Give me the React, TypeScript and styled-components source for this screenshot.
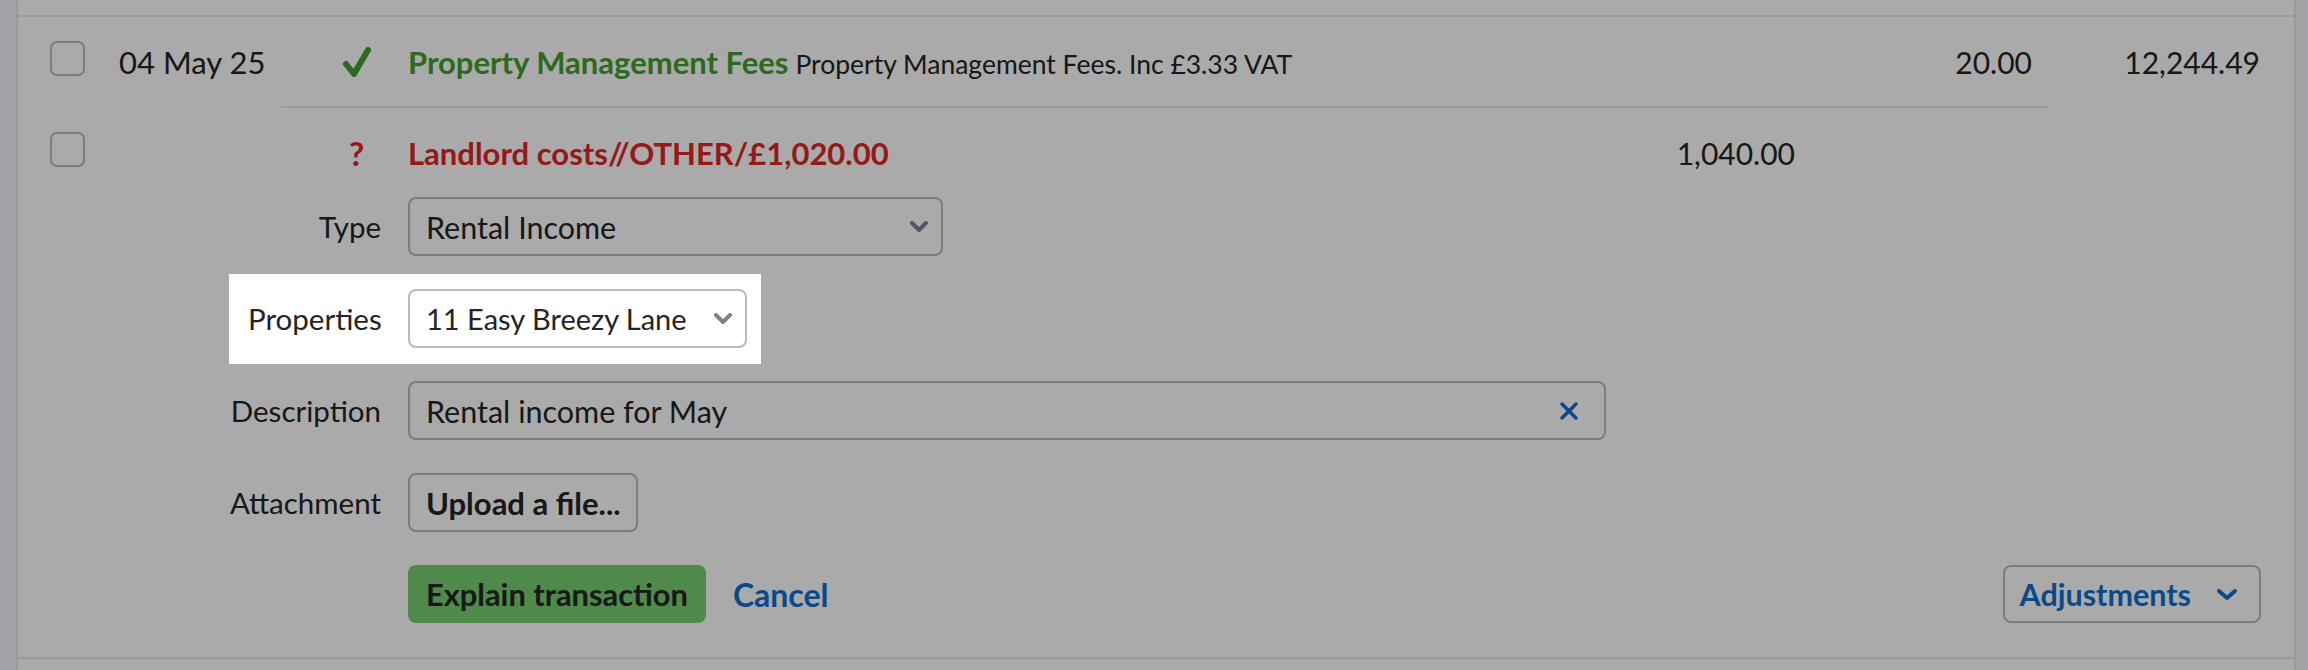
import React from "react";
import styled, { createGlobalStyle } from "styled-components";

const C = {
  text: "#242424",
  green: "#449e2d",
  red: "#e02626",
  blue: "#1070cf",
  btnGreen: "#78cf6f",
  line: "#e8e9ee",
  border: "#b3bcc5",
  chevron: "#778591",
  page: "#f4f7fc",
};

const GlobalStyle = createGlobalStyle`
  html, body { margin: 0; padding: 0; }
  body {
    background: ${C.page};
    font-family: Lato, "Open Sans", sans-serif;
    color: ${C.text};
    overflow: hidden;
  }
  * { box-sizing: border-box; }
`;

const Panel = styled.div`
  margin: 0 12px 0 16px;
  min-height: 100vh;
  background: #fff;
  border-left: 2px solid ${C.line};
  border-right: 2px solid ${C.line};
`;

const PrevRow = styled.div`
  height: 17px;
  border-bottom: 2px solid ${C.line};
`;

const Checkbox = styled.span`
  align-self: start;
  margin-top: 24px;
  width: 35px;
  height: 35px;
  border: 2px solid ${C.border};
  border-radius: 7px;
  background: #fff;
`;

const TxRow = styled.div<{ $h: number; $shift?: number }>`
  display: grid;
  grid-template-columns: 69px 224px 65px 1fr 200px 237px 228px;
  align-items: center;
  min-height: ${(p) => p.$h}px;
  padding: 0 34px 0 32px;

  & > :not(${Checkbox}) {
    padding-top: ${(p) => p.$shift ?? 0}px;
  }
`;

const Divider = styled.div`
  height: 2px;
  margin: 0 245px 0 263px;
  background: ${C.line};
`;

const Group = styled.div`
  border-bottom: 2px solid ${C.line};
`;

const DateCell = styled.span`
  font-size: 31px;
`;

const IconCell = styled.span`
  display: flex;
  align-items: center;
  padding-left: 6px;
`;

const Query = styled.span`
  color: ${C.red};
  font-weight: 700;
  font-size: 33px;
`;

const Content = styled.span`
  display: flex;
  align-items: baseline;
  gap: 7px;
  white-space: nowrap;
`;

const Title = styled.span<{ $color: string }>`
  color: ${(p) => p.$color};
  font-weight: 700;
  font-size: 31px;
`;

const Desc = styled.span`
  font-size: 26.5px;
`;

const Amount = styled.span`
  text-align: right;
  font-size: 30px;
`;

const Form = styled.div`
  display: flex;
  flex-direction: column;
  gap: 33px;
  padding: 7px 33px 34px 0;
`;

const FormRow = styled.div`
  display: grid;
  grid-template-columns: 363px 1fr;
  column-gap: 27px;
  align-items: center;
`;

const SpotRow = styled.div`
  display: flex;
`;

const Spotlight = styled.div`
  position: relative;
  z-index: 1;
  display: grid;
  grid-template-columns: 133px 339px;
  column-gap: 27px;
  align-items: center;
  margin: -15px 0 -16px 211px;
  padding: 15px 14px 16px 19px;
  background: #fff;
  box-shadow: 0 0 0 5000px rgba(0, 0, 0, 0.333);
`;

const Label = styled.label`
  text-align: right;
  font-size: 29.5px;
  white-space: nowrap;
`;

const Field = styled.div<{ $w: number; $size?: number }>`
  display: flex;
  align-items: center;
  justify-content: space-between;
  width: ${(p) => p.$w}px;
  height: 59px;
  padding: 0 13px 0 16px;
  border: 2px solid ${C.border};
  border-radius: 8px;
  background: #fff;
  font-size: ${(p) => p.$size ?? 30.5}px;
  white-space: nowrap;
`;

const InputField = styled(Field)`
  padding-right: 25px;
`;

const UploadButton = styled.button`
  justify-self: start;
  height: 59px;
  padding: 0 15px 0 16px;
  border: 2px solid ${C.border};
  border-radius: 8px;
  background: #fff;
  font-family: inherit;
  font-size: 31px;
  font-weight: 700;
  color: ${C.text};
`;

const Actions = styled.div`
  display: flex;
  align-items: center;
`;

const PrimaryButton = styled.button`
  height: 58px;
  padding: 0 18px;
  border: none;
  border-radius: 8px;
  background: ${C.btnGreen};
  font-family: inherit;
  font-size: 30.8px;
  font-weight: 700;
  color: ${C.text};
`;

const LinkButton = styled.button`
  margin-left: 27px;
  padding: 0;
  border: none;
  background: none;
  font-family: inherit;
  font-size: 32px;
  font-weight: 700;
  color: ${C.blue};
`;

const MenuButton = styled.button`
  margin-left: auto;
  display: flex;
  align-items: center;
  gap: 26px;
  height: 58px;
  padding: 0 22px 0 15px;
  border: 2px solid ${C.border};
  border-radius: 8px;
  background: #fff;
  font-family: inherit;
  font-size: 30.5px;
  font-weight: 700;
  color: ${C.blue};
`;

const Chevron = ({ color, w = 18 }: { color: string; w?: number }) => (
  <svg width={w} height={11} viewBox={`0 0 ${w} 11`} fill="none">
    <polyline
      points={`2,2 ${w / 2},9 ${w - 2},2`}
      stroke={color}
      strokeWidth={4}
      strokeLinecap="round"
      strokeLinejoin="round"
    />
  </svg>
);

const CheckIcon = () => (
  <svg width={28} height={30} viewBox="0 0 28 30" fill="none" style={{ marginLeft: -6 }}>
    <path
      d="M3 17 L11 27 L25 3"
      stroke={C.green}
      strokeWidth={6}
      strokeLinecap="round"
      strokeLinejoin="round"
    />
  </svg>
);

const ClearIcon = () => (
  <svg width={20} height={20} viewBox="0 0 20 20" fill="none">
    <path d="M3 3 L17 17 M17 3 L3 17" stroke={C.blue} strokeWidth={3.5} strokeLinecap="round" />
  </svg>
);

export default function App() {
  return (
    <>
      <GlobalStyle />
      <Panel>
        <PrevRow />
        <TxRow $h={89}>
          <Checkbox />
          <DateCell>04 May 25</DateCell>
          <IconCell>
            <CheckIcon />
          </IconCell>
          <Content>
            <Title $color={C.green}>Property Management Fees</Title>
            <Desc>Property Management Fees. Inc £3.33 VAT</Desc>
          </Content>
          <Amount />
          <Amount>20.00</Amount>
          <Amount>12,244.49</Amount>
        </TxRow>
        <Divider />
        <Group>
          <TxRow $h={82} $shift={8}>
            <Checkbox />
            <DateCell />
            <IconCell>
              <Query>?</Query>
            </IconCell>
            <Content>
              <Title $color={C.red}>Landlord costs//OTHER/£1,020.00</Title>
            </Content>
            <Amount>1,040.00</Amount>
            <Amount />
            <Amount />
          </TxRow>
          <Form>
            <FormRow>
              <Label>Type</Label>
              <Field $w={535}>
                <span>Rental Income</span>
                <Chevron color={C.chevron} />
              </Field>
            </FormRow>
            <SpotRow>
              <Spotlight>
                <Label>Properties</Label>
                <Field $w={339} $size={29}>
                  <span>11 Easy Breezy Lane</span>
                  <Chevron color={C.chevron} />
                </Field>
              </Spotlight>
            </SpotRow>
            <FormRow>
              <Label>Description</Label>
              <InputField $w={1198}>
                <span>Rental income for May</span>
                <ClearIcon />
              </InputField>
            </FormRow>
            <FormRow>
              <Label>Attachment</Label>
              <UploadButton>Upload a file...</UploadButton>
            </FormRow>
            <FormRow>
              <span />
              <Actions>
                <PrimaryButton>Explain transaction</PrimaryButton>
                <LinkButton>Cancel</LinkButton>
                <MenuButton>
                  Adjustments
                  <Chevron color={C.blue} w={20} />
                </MenuButton>
              </Actions>
            </FormRow>
          </Form>
        </Group>
      </Panel>
    </>
  );
}
